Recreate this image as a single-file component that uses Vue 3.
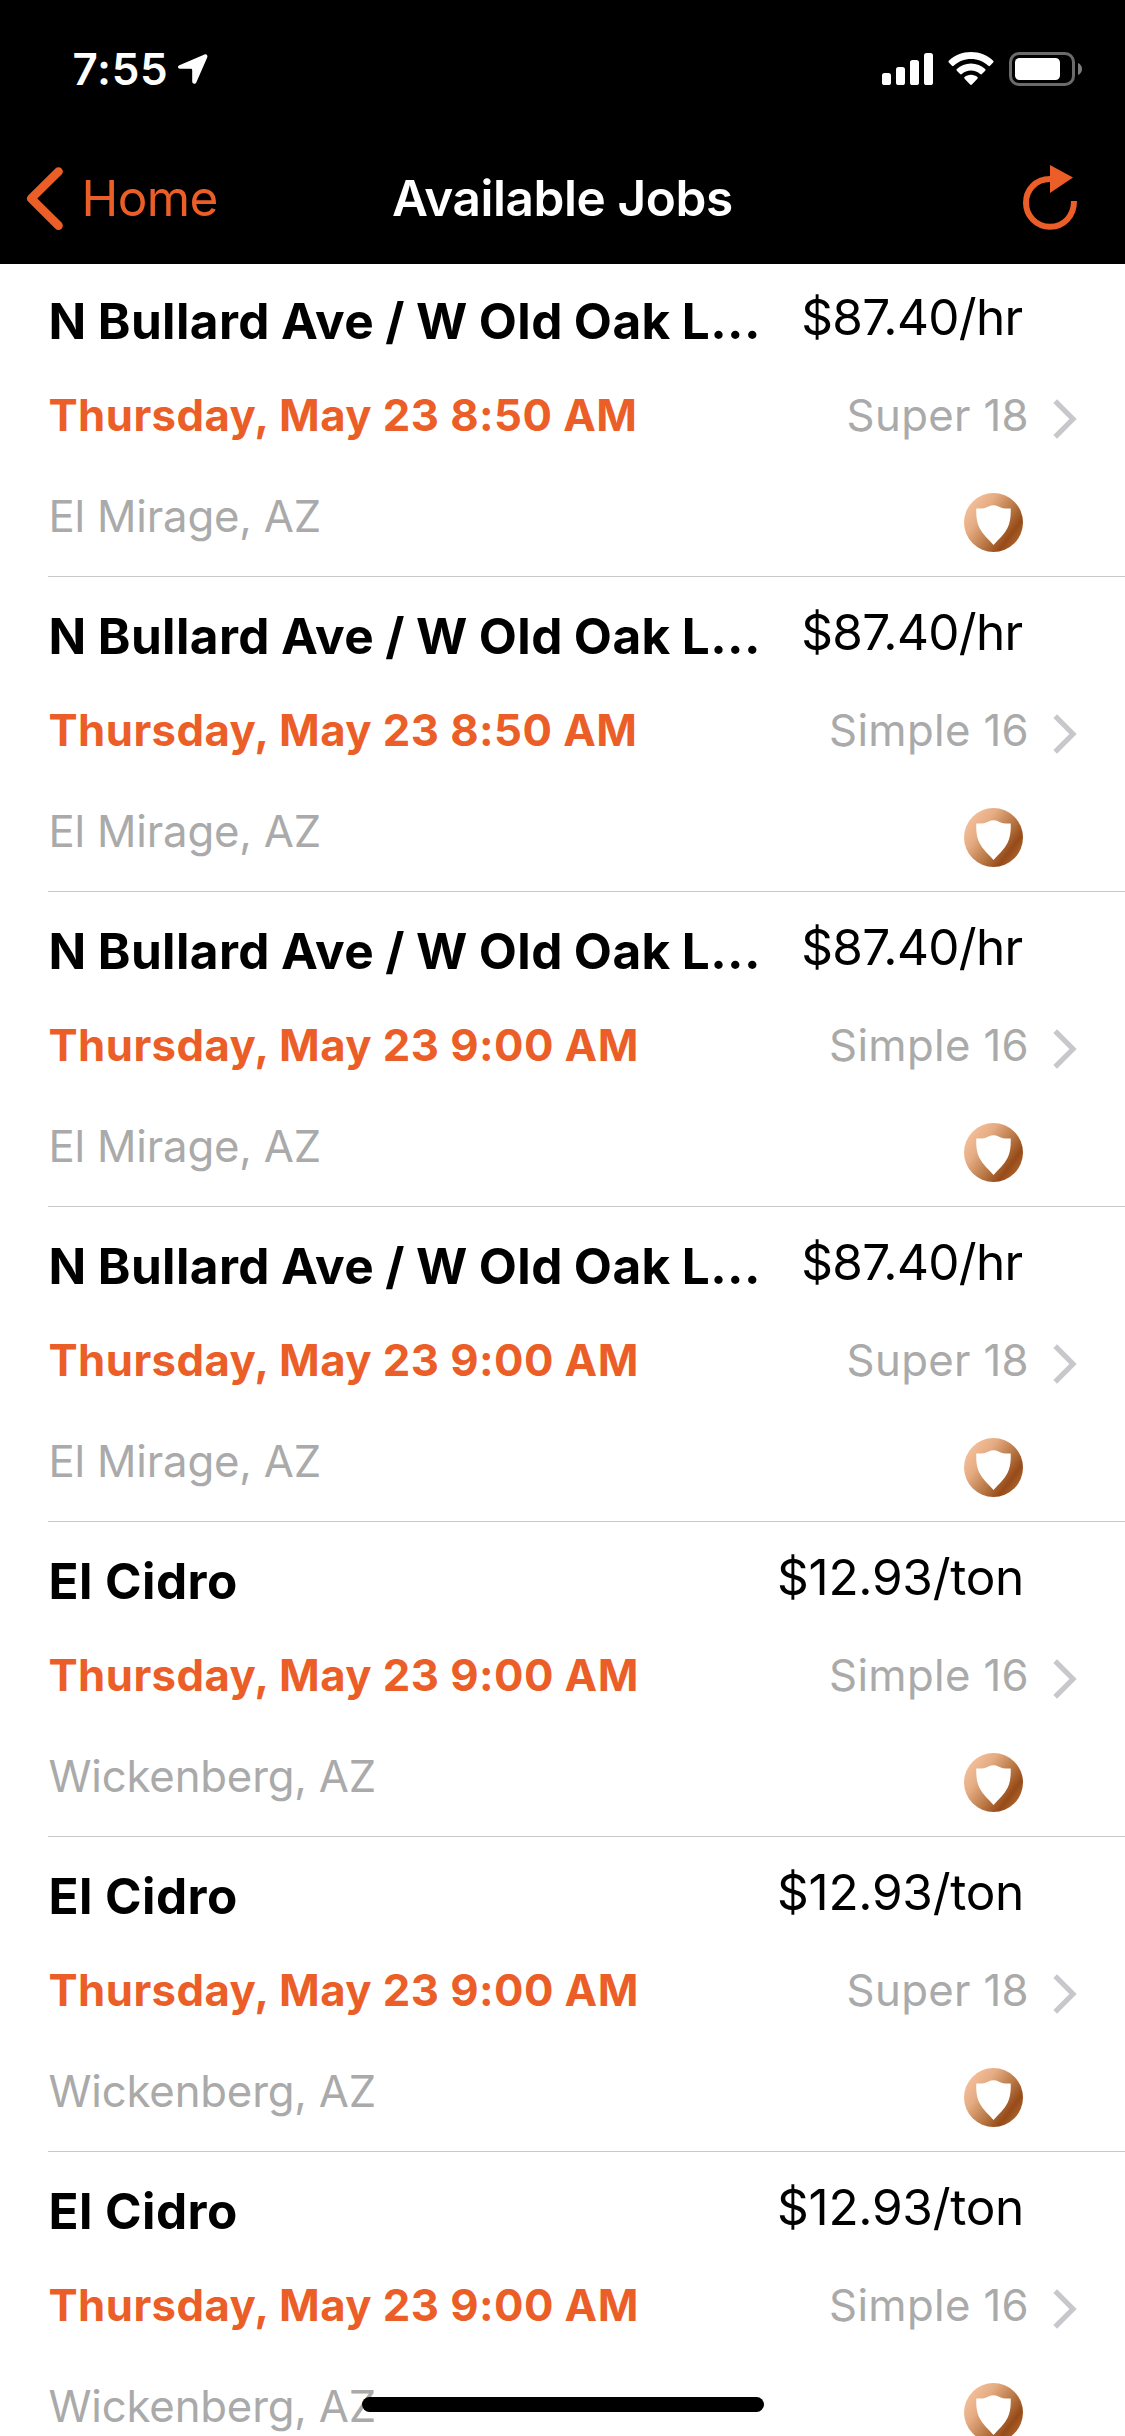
<script setup>
const street = 'N Bullard Ave / W Old Oak L...'

const jobs = [
  { name: street, amount: '$87.40', unit: 'hr', date: 'Thursday, May 23 8:50 AM', truck: 'Super 18', city: 'El Mirage, AZ' },
  { name: street, amount: '$87.40', unit: 'hr', date: 'Thursday, May 23 8:50 AM', truck: 'Simple 16', city: 'El Mirage, AZ' },
  { name: street, amount: '$87.40', unit: 'hr', date: 'Thursday, May 23 9:00 AM', truck: 'Simple 16', city: 'El Mirage, AZ' },
  { name: street, amount: '$87.40', unit: 'hr', date: 'Thursday, May 23 9:00 AM', truck: 'Super 18', city: 'El Mirage, AZ' },
  { name: 'El Cidro', amount: '$12.93', unit: 'ton', date: 'Thursday, May 23 9:00 AM', truck: 'Simple 16', city: 'Wickenberg, AZ' },
  { name: 'El Cidro', amount: '$12.93', unit: 'ton', date: 'Thursday, May 23 9:00 AM', truck: 'Super 18', city: 'Wickenberg, AZ' },
  { name: 'El Cidro', amount: '$12.93', unit: 'ton', date: 'Thursday, May 23 9:00 AM', truck: 'Simple 16', city: 'Wickenberg, AZ' },
]
</script>

<template>
  <div class="screen">
    <header class="header">
      <div class="status">
        <div class="clock">
          <span class="time">7:55</span>
          <svg class="location" width="30" height="30" viewBox="0 0 30 30">
            <path d="M26.500.4 1.400 11.200C-.7 12.200-.3 14.800 2 14.800H13Q14.200 14.800 14.200 16V27.500C14.300 30 17.400 30.600 18.400 28.200L29.200 3.400C30 1.200 28.500-.3 26.500.4Z" fill="#fff" />
          </svg>
        </div>
        <div class="indicators">
          <svg width="51" height="32" viewBox="0 0 51 32" fill="#fff">
            <rect x="0" y="20" width="9" height="12" rx="2.6" />
            <rect x="14" y="14" width="9" height="18" rx="2.6" />
            <rect x="28" y="7" width="9" height="25" rx="2.6" />
            <rect x="42" y="0" width="9" height="32" rx="2.6" />
          </svg>
          <svg class="wifi" width="46" height="34" viewBox="0 0 46 34" fill="#fff">
            <path d="M23 0C14.4 0 6.6 3.3.8 8.8Q0 9.6.8 10.4L4 13.8Q4.8 14.6 5.7 13.8C10.200 9.600 16.300 7 23 7S35.800 9.600 40.300 13.800Q41.200 14.600 42 13.800L45.200 10.400Q46 9.600 45.200 8.800C39.400 3.300 31.600 0 23 0Z" />
            <path d="M23 11.500C17.500 11.500 12.500 13.600 8.800 17.100Q8 17.900 8.800 18.700L12.100 22Q12.900 22.800 13.800 22C16.200 19.800 19.400 18.400 23 18.400S29.800 19.800 32.200 22Q33.100 22.800 33.900 22L37.200 18.700Q38 17.900 37.200 17.100C33.500 13.600 28.500 11.500 23 11.500Z" />
            <path d="M23 22.800C20.500 22.800 18.300 23.700 16.600 25.100Q15.700 25.900 16.600 26.800L22.100 32.500Q23 33.400 23.900 32.500L29.400 26.800Q30.300 25.900 29.400 25.100C27.700 23.700 25.500 22.800 23 22.800Z" />
          </svg>
          <svg class="battery" width="73" height="34" viewBox="0 0 73 34">
            <rect x="1.500" y="1.500" width="63" height="31" rx="8.500" fill="none" stroke="#6b6b6b" stroke-width="3" />
            <rect x="6" y="6" width="45" height="22" rx="4.500" fill="#fff" />
            <path d="M69 11C71.600 12 73 14.400 73 17S71.600 22 69 23Z" fill="#7d7d7d" />
          </svg>
        </div>
      </div>
      <nav class="nav">
        <a class="back">
          <svg width="38" height="65" viewBox="0 0 38 65">
            <path d="M32.500 5.500 5.200 32.500 32.500 59.600" fill="none" stroke="#eb5e28" stroke-width="8.700" stroke-linecap="round" stroke-linejoin="round" />
          </svg>
          <span class="back-label">Home</span>
        </a>
        <h1 class="title">Available Jobs</h1>
        <svg class="refresh" width="54" height="65" viewBox="0 0 54 65">
          <path d="M27 14C12.500 14 3 25 3 37.700S13 61.700 27 61.700 51 51 51 36" fill="none" stroke="#eb5e28" stroke-width="6" />
          <path d="M27 0 50 12.500 27 28Z" fill="#eb5e28" />
        </svg>
      </nav>
    </header>

    <main class="list">
      <article v-for="(job, i) in jobs" :key="i" class="job">
        <div class="info">
          <h2 class="name" :class="{ short: job.name !== street }">{{ job.name }}</h2>
          <p class="date">{{ job.date }}</p>
          <p class="city">{{ job.city }}</p>
        </div>
        <div class="meta">
          <p class="price" :class="job.unit">{{ job.amount }}/{{ job.unit }}</p>
          <p class="truck">{{ job.truck }}</p>
          <svg class="badge" width="59" height="59" viewBox="0 0 59 59">
            <defs>
              <linearGradient :id="'bronze' + i" x1="0.1" y1="0.2" x2="0.9" y2="0.8">
                <stop offset="0" stop-color="#f2bd98" />
                <stop offset="0.25" stop-color="#e6ad84" />
                <stop offset="0.6" stop-color="#b97845" />
                <stop offset="0.86" stop-color="#964b19" />
                <stop offset="1" stop-color="#a86029" />
              </linearGradient>
            </defs>
            <circle cx="29.500" cy="29.500" r="29.500" :fill="`url(#bronze${i})`" />
            <path d="M12.300 15.500C17 15.700 21 15.500 24.500 13.500Q29.500 11.200 34.500 13.500C38 15.500 42 15.700 46.700 15.500C47 24 46 30 43.500 35C40.500 41 34.500 46.500 29.500 52C24.500 46.500 18.500 41 15.500 35C13 30 12 24 12.300 15.500Z" fill="#fff" />
          </svg>
        </div>
        <svg class="chevron" width="24" height="40" viewBox="0 0 24 40">
          <path d="M2.200 2.200 20 20 2.200 37.800" fill="none" stroke="#c7c7cc" stroke-width="5.200" />
        </svg>
      </article>
    </main>
    <div class="home-indicator"></div>
  </div>
</template>

<style>
body {
  background: #fff;
}
</style>

<style scoped>
.screen {
  position: relative;
  width: 1125px;
  height: 2436px;
  overflow: hidden;
  background: #fff;
  font-family: Inter, "Liberation Sans", sans-serif;
}
h1, h2, p {
  margin: 0;
}
svg {
  display: block;
  flex: none;
}
.header {
  box-sizing: border-box;
  height: 264px;
  background: #000;
}
.status {
  box-sizing: border-box;
  height: 132px;
  display: flex;
  justify-content: space-between;
  padding: 52px 43px 0 72.5px;
}
.clock {
  display: flex;
}
.time {
  color: #fff;
  font-size: 44px;
  font-weight: 600;
  line-height: 34px;
  letter-spacing: 0.64px;
}
.location {
  margin: 2px 0 0 10px;
}
.indicators {
  display: flex;
  align-items: flex-start;
}
.indicators > :first-child {
  margin-top: 1px;
}
.wifi {
  margin-left: 15px;
}
.battery {
  margin-left: 15px;
}
.nav {
  height: 132px;
  display: flex;
  align-items: flex-start;
  justify-content: space-between;
  padding: 0 48px 0 26px;
}
.back {
  display: flex;
  width: 250px;
  margin-top: 34px;
}
.back-label {
  margin: 2px 0 0 17.500px;
  color: #eb5e28;
  font-size: 49.500px;
  line-height: 60px;
  letter-spacing: -0.6px;
}
.title {
  flex: 1;
  margin: 36px 0 0 116px;
  color: #fff;
  font-size: 49.500px;
  font-weight: 600;
  line-height: 60px;
  letter-spacing: -0.41px;
  white-space: nowrap;
}
.refresh {
  margin-top: 33px;
}
.list {
  margin-top: -2px;
}
.job {
  box-sizing: border-box;
  height: 315px;
  margin-left: 48px;
  display: flex;
  background: linear-gradient(#c8c7cc, #c8c7cc) 0 314px / 100% 1px no-repeat;
}
.info {
  flex: 1;
  padding: 29px 0 0 0.5px;
}
.name {
  color: #000;
  font-size: 49.500px;
  font-weight: 700;
  line-height: 60px;
  letter-spacing: 0.4px;
  word-spacing: -1px;
  white-space: nowrap;
}
.name.short {
  letter-spacing: 0.44px;
  word-spacing: 0;
}
.date {
  margin-top: 38px;
  color: #eb5e28;
  font-size: 43.700px;
  font-weight: 700;
  line-height: 54px;
  letter-spacing: 0.44px;
  white-space: nowrap;
}
.city {
  margin-top: 47px;
  color: #aaa;
  font-size: 43.700px;
  line-height: 54px;
  letter-spacing: -0.18px;
}
.meta {
  display: flex;
  flex-direction: column;
  align-items: flex-end;
  padding-top: 25px;
}
.price {
  margin-right: 5px;
  color: #000;
  font-size: 49.500px;
  line-height: 60px;
  letter-spacing: -0.28px;
}
.price.hr {
  margin-right: 6.500px;
  letter-spacing: -0.68px;
}
.truck {
  margin-top: 42px;
  color: #aaa;
  font-size: 43.700px;
  line-height: 54px;
  letter-spacing: 0.35px;
}
.badge {
  margin: 50px 6px 0 0;
}
.chevron {
  margin: 137px 48px 0 24px;
}
.home-indicator {
  position: absolute;
  left: 362px;
  top: 2397px;
  width: 402px;
  height: 15px;
  border-radius: 8px;
  background: #000;
}
</style>
